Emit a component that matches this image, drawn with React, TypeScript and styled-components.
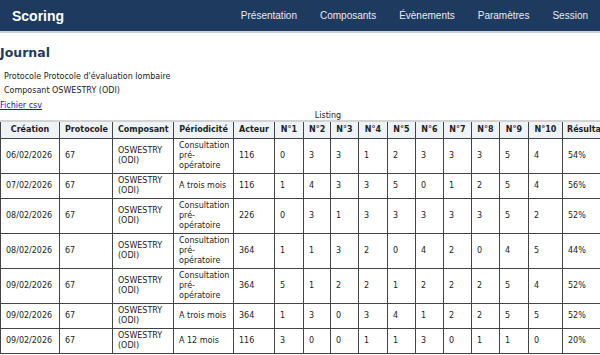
import React from 'react';
import styled, { createGlobalStyle } from 'styled-components';

const GlobalStyle = createGlobalStyle`
  body {
    margin: 0;
    background: #fff;
    font-family: 'DejaVu Sans', Verdana, sans-serif;
    overflow: hidden;
  }
`;

const NavBar = styled.header`
  height: 33px;
  background: #1f3a5f;
  border-bottom: 2px solid #c9d1db;
  box-sizing: border-box;
  display: flex;
  align-items: center;
  justify-content: space-between;
  padding: 0 12px;
  font-family: 'Liberation Sans', Arial, sans-serif;
`;

const Brand = styled.div`
  color: #fff;
  font-size: 14px;
  font-weight: bold;
`;

const NavLinks = styled.nav`
  display: flex;
  gap: 23px;
`;

const NavLink = styled.a`
  color: #e6ebf1;
  font-size: 10px;
  text-decoration: none;
`;

const Main = styled.main`
  padding: 0;
`;

const Title = styled.h2`
  margin: 12px 0 11px;
  font-size: 12.5px;
  color: #1f3a5f;
  font-weight: bold;
`;

const Info = styled.p`
  margin: 0 0 3px 4px;
  font-size: 8px;
  line-height: 11px;
  color: #222;
`;

const CsvLink = styled.a`
  display: block;
  font-size: 8px;
  line-height: 11px;
  color: #1a0dff;
  text-decoration: underline;
  margin-top: 4px;
`;

const Table = styled.table`
  border-collapse: collapse;
  table-layout: fixed;
  width: 628px;
  font-size: 8px;
  color: #222;
`;

const Caption = styled.caption`
  font-size: 8px;
  line-height: 9px;
  text-align: center;
  padding-left: 27px;
  border-bottom: 2px solid #d3d3d3;
`;

const Th = styled.th<{ $left?: boolean }>`
  background: #eef3f8;
  border: 1px solid #444;
  border-top: none;
  padding: 3px 5px 3px ${({ $left }) => ($left ? '4px' : '5px')};
  line-height: 10px;
  font-weight: bold;
  text-align: ${({ $left }) => ($left ? 'left' : 'center')};
  white-space: nowrap;
`;

const Td = styled.td`
  border: 1px solid #444;
  padding: 2px 5px;
  text-align: left;
  vertical-align: middle;
  line-height: 10px;
`;

const headers = ['Création', 'Protocole', 'Composant', 'Périodicité', 'Acteur', 'N°1', 'N°2', 'N°3', 'N°4', 'N°5', 'N°6', 'N°7', 'N°8', 'N°9', 'N°10', 'Résultat'];
const widths = [59, 53, 61, 60, 41, 29, 27, 28, 29, 28, 28, 28, 28, 29, 34, 66];

const rows = [
  ['06/02/2026', '67', 'OSWESTRY (ODI)', 'Consultation pré-opératoire', '116', '0', '3', '3', '1', '2', '3', '3', '3', '5', '4', '54%'],
  ['07/02/2026', '67', 'OSWESTRY (ODI)', 'A trois mois', '116', '1', '4', '3', '3', '5', '0', '1', '2', '5', '4', '56%'],
  ['08/02/2026', '67', 'OSWESTRY (ODI)', 'Consultation pré-opératoire', '226', '0', '3', '1', '3', '3', '3', '3', '3', '5', '2', '52%'],
  ['08/02/2026', '67', 'OSWESTRY (ODI)', 'Consultation pré-opératoire', '364', '1', '1', '3', '2', '0', '4', '2', '0', '4', '5', '44%'],
  ['09/02/2026', '67', 'OSWESTRY (ODI)', 'Consultation pré-opératoire', '364', '5', '1', '2', '2', '1', '2', '2', '2', '5', '4', '52%'],
  ['09/02/2026', '67', 'OSWESTRY (ODI)', 'A trois mois', '364', '1', '3', '0', '3', '4', '1', '2', '2', '5', '5', '52%'],
  ['09/02/2026', '67', 'OSWESTRY (ODI)', 'A 12 mois', '116', '3', '0', '0', '1', '1', '3', '0', '1', '1', '0', '20%'],
];

const nav = ['Présentation', 'Composants', 'Évènements', 'Paramètres', 'Session'];

export default function App() {
  return (
    <>
      <GlobalStyle />
      <NavBar>
        <Brand>Scoring</Brand>
        <NavLinks>
          {nav.map((n) => (
            <NavLink key={n} href="#">{n}</NavLink>
          ))}
        </NavLinks>
      </NavBar>
      <Main>
        <Title>Journal</Title>
        <Info>Protocole Protocole d'évaluation lombaire</Info>
        <Info>Composant OSWESTRY (ODI)</Info>
        <CsvLink href="#">Fichier csv</CsvLink>
        <Table>
          <Caption>Listing</Caption>
          <colgroup>
            {widths.map((w, i) => (
              <col key={i} style={{ width: w }} />
            ))}
          </colgroup>
          <thead>
            <tr>
              {headers.map((h, i) => (
                <Th key={h} $left={i === headers.length - 1}>{h}</Th>
              ))}
            </tr>
          </thead>
          <tbody>
            {rows.map((r, i) => (
              <tr key={i}>
                {r.map((c, j) => (
                  <Td key={j}>{c}</Td>
                ))}
              </tr>
            ))}
          </tbody>
        </Table>
      </Main>
    </>
  );
}
